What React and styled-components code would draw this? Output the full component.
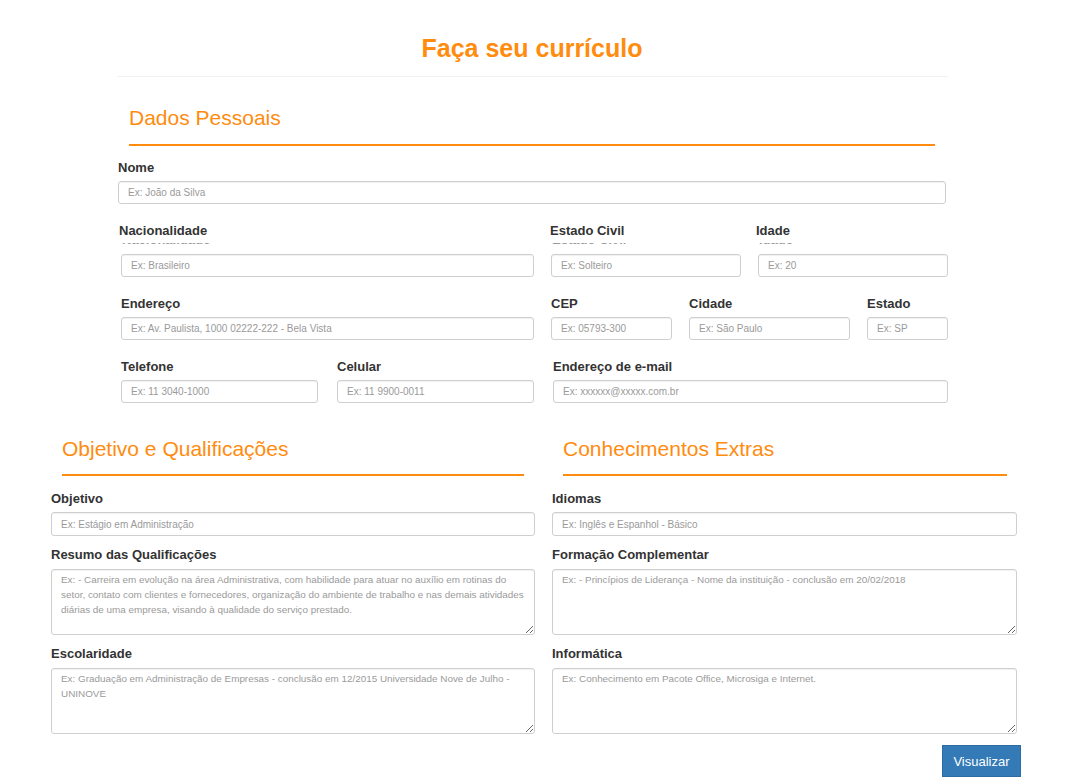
import React from "react";
import styled, { createGlobalStyle } from "styled-components";

const GlobalStyle = createGlobalStyle`
  body {
    margin: 0;
    background: #fff;
    font-family: "Liberation Sans", Arial, sans-serif;
    color: #333;
  }
  * { box-sizing: border-box; }
`;

const ORANGE = "#ff8c0f";

const personalRows = [
  {
    cols: "413px 190px 190px",
    gap: 17,
    ghost: true,
    fields: [
      { label: "Nacionalidade", ph: "Ex: Brasileiro", shift: -2 },
      { label: "Estado Civil", ph: "Ex: Solteiro", shift: -1 },
      { label: "Idade", ph: "Ex: 20", shift: -2 },
    ],
  },
  {
    cols: "413px 121px 161px 81px",
    gap: 17,
    fields: [
      { label: "Endereço", ph: "Ex: Av. Paulista, 1000 02222-222 - Bela Vista" },
      { label: "CEP", ph: "Ex: 05793-300" },
      { label: "Cidade", ph: "Ex: São Paulo" },
      { label: "Estado", ph: "Ex: SP" },
    ],
  },
  {
    cols: "197px 197px 395px",
    gap: 19,
    fields: [
      { label: "Telefone", ph: "Ex: 11 3040-1000" },
      { label: "Celular", ph: "Ex: 11 9900-0011" },
      { label: "Endereço de e-mail", ph: "Ex: xxxxxx@xxxxx.com.br" },
    ],
  },
];

const leftFields = [
  { label: "Objetivo", ph: "Ex: Estágio em Administração" },
  {
    label: "Resumo das Qualificações",
    ph: "Ex: - Carreira em evolução na área Administrativa, com habilidade para atuar no auxílio em rotinas do setor, contato com clientes e fornecedores, organização do ambiente de trabalho e nas demais atividades diárias de uma empresa, visando à qualidade do serviço prestado.",
    area: true,
  },
  {
    label: "Escolaridade",
    ph: "Ex: Graduação em Administração de Empresas - conclusão em 12/2015 Universidade Nove de Julho - UNINOVE",
    area: true,
  },
];

const rightFields = [
  { label: "Idiomas", ph: "Ex: Inglês e Espanhol - Básico" },
  {
    label: "Formação Complementar",
    ph: "Ex: - Princípios de Liderança - Nome da instituição - conclusão em 20/02/2018",
    area: true,
  },
  {
    label: "Informática",
    ph: "Ex: Conhecimento em Pacote Office, Microsiga e Internet.",
    area: true,
  },
];

export default function App() {
  return (
    <>
      <GlobalStyle />
      <Page>
        <Title>Faça seu currículo</Title>
        <Divider />

        <Personal>
          <SectionHead $right={13} $top={29} $bottom={14} $mb={14}>
            <SectionTitle>Dados Pessoais</SectionTitle>
          </SectionHead>

          <Field $mb={19} $w={828}>
            <Label>Nome</Label>
            <Input placeholder="Ex: João da Silva" />
          </Field>

          {personalRows.map((row, i) => (
            <Row key={i} $cols={row.cols} $gap={row.gap}>
              {row.fields.map((f) => (
                <Field key={f.label}>
                  <Label $shift={f.shift}>{f.label}</Label>
                  {row.ghost && (
                    <Ghost aria-hidden="true">
                      <span>{f.label}</span>
                    </Ghost>
                  )}
                  <Input placeholder={f.ph} />
                </Field>
              ))}
            </Row>
          ))}
        </Personal>

        <Columns>
          <Column $w={484}>
            <SectionHead $right={11} $top={15} $bottom={13} $mb={15}>
              <SectionTitle>Objetivo e Qualificações</SectionTitle>
            </SectionHead>
            {leftFields.map((f) => (
              <Field key={f.label} $mb={11}>
                <Label>{f.label}</Label>
                {f.area ? <Area placeholder={f.ph} /> : <Input $h={24} placeholder={f.ph} />}
              </Field>
            ))}
          </Column>
          <Column $w={465}>
            <SectionHead $right={10} $top={15} $bottom={13} $mb={15}>
              <SectionTitle>Conhecimentos Extras</SectionTitle>
            </SectionHead>
            {rightFields.map((f) => (
              <Field key={f.label} $mb={11}>
                <Label>{f.label}</Label>
                {f.area ? <Area placeholder={f.ph} /> : <Input $h={24} placeholder={f.ph} />}
              </Field>
            ))}
          </Column>
        </Columns>

        <Actions>
          <Button type="button">Visualizar</Button>
        </Actions>
      </Page>
    </>
  );
}

const Page = styled.div`
  width: 1076px;
  padding-top: 34px;
`;

const Title = styled.h1`
  margin: 0;
  padding-right: 12px;
  text-align: center;
  font-size: 25px;
  line-height: 28px;
  font-weight: bold;
  color: ${ORANGE};
`;

const Divider = styled.hr`
  margin: 14px 0 0 118px;
  width: 830px;
  border: 0;
  border-top: 1px solid #f0f0f0;
`;

const Personal = styled.section`
  margin-left: 118px;
  width: 830px;
`;

const SectionHead = styled.div`
  margin: 0 ${(p) => p.$right}px ${(p) => p.$mb}px 11px;
  padding: ${(p) => p.$top}px 0 ${(p) => p.$bottom}px;
  border-bottom: 2px solid ${ORANGE};
`;

const SectionTitle = styled.h2`
  margin: 0;
  font-size: 21px;
  line-height: 24px;
  font-weight: normal;
  color: ${ORANGE};
`;

const Row = styled.div`
  display: grid;
  grid-template-columns: ${(p) => p.$cols};
  column-gap: ${(p) => p.$gap}px;
  padding-left: 3px;
  margin-bottom: 19px;
`;

const Field = styled.div`
  display: flex;
  flex-direction: column;
  width: ${(p) => (p.$w ? `${p.$w}px` : "auto")};
  margin-bottom: ${(p) => p.$mb || 0}px;
`;

const Label = styled.label`
  display: block;
  margin: 0 0 5px ${(p) => p.$shift || 0}px;
  font-size: 13px;
  line-height: 16px;
  font-weight: bold;
  color: #333;
`;

const Ghost = styled.div`
  height: 3px;
  overflow: hidden;
  margin: -1px 0 8px 1px;
  font-size: 13px;
  font-weight: bold;
  color: #9a9a9a;

  span {
    display: block;
    line-height: 16px;
    margin-top: -11px;
  }
`;

const Input = styled.input`
  width: 100%;
  height: ${(p) => p.$h || 23}px;
  padding: 0 9px;
  border: 1px solid #cfcfcf;
  border-radius: 3px;
  box-shadow: inset 0 1px 1px rgba(0, 0, 0, 0.06);
  font-family: "Liberation Sans", Arial, sans-serif;
  font-size: 10px;
  color: #555;

  &::placeholder {
    color: #9a9a9a;
  }
`;

const Area = styled.textarea`
  width: 100%;
  height: 66px;
  margin-top: 1px;
  padding: 2px 6px 2px 9px;
  border: 1px solid #cfcfcf;
  border-radius: 3px;
  box-shadow: inset 0 1px 1px rgba(0, 0, 0, 0.06);
  resize: vertical;
  font-family: "Liberation Sans", Arial, sans-serif;
  font-size: 9.9px;
  line-height: 15px;
  color: #555;

  &::placeholder {
    color: #9a9a9a;
  }
`;

const Columns = styled.div`
  display: flex;
  gap: 17px;
  margin-left: 51px;
`;

const Column = styled.div`
  width: ${(p) => p.$w}px;
`;

const Actions = styled.div`
  display: flex;
  justify-content: flex-end;
  width: 1021px;
`;

const Button = styled.button`
  width: 79px;
  height: 32px;
  border: 1px solid #2e6da4;
  border-radius: 0;
  background: #337ab7;
  color: #fff;
  font-family: "Liberation Sans", Arial, sans-serif;
  font-size: 13px;
  cursor: pointer;
`;
